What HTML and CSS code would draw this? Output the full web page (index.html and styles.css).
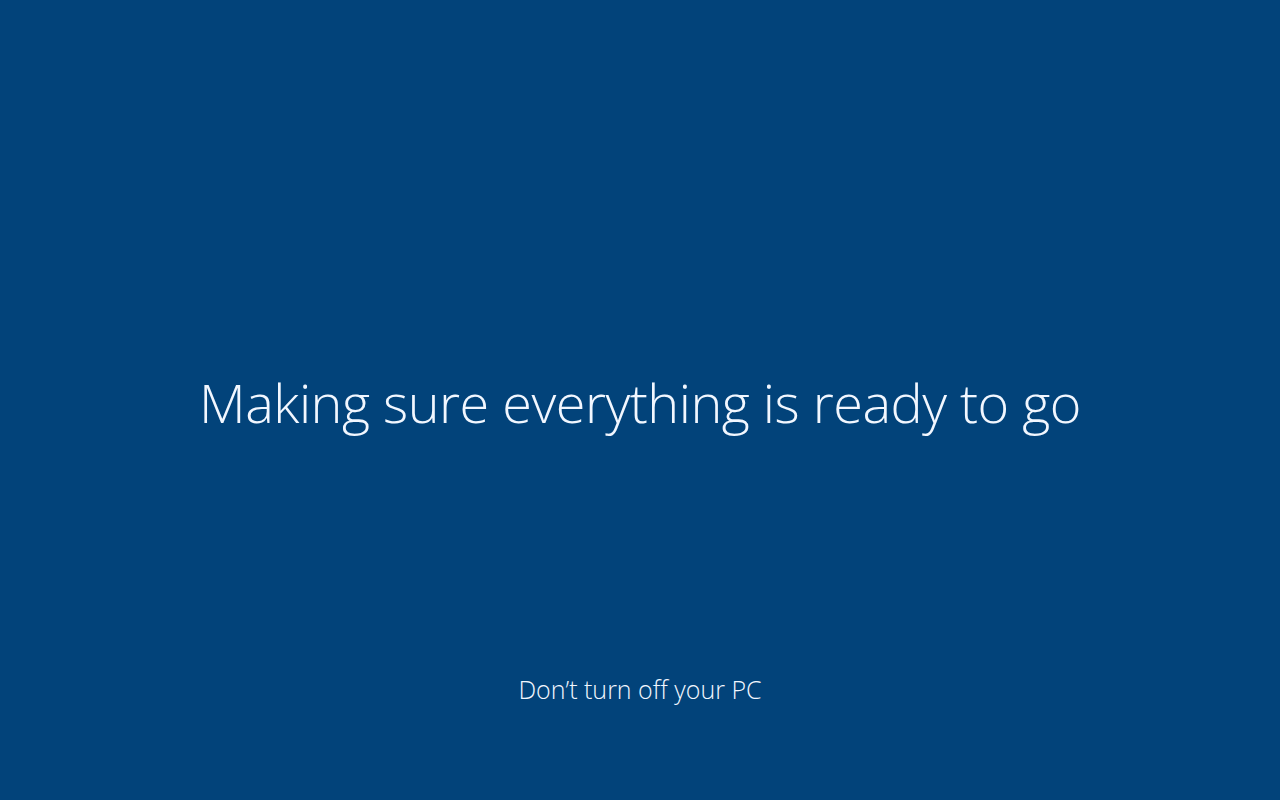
FILE: index.html
```html
<!DOCTYPE html>
<html lang="en">
<head>
    <meta charset="UTF-8">
    <meta name="viewport" content="width=device-width, initial-scale=1.0">
    <title>Windows Setup</title>
    <link rel="stylesheet" href="styles.css">
</head>
<body>
    <div class="screen">
        <div class="stage">
            <h1 class="status">Making sure everything is ready to go</h1>
        </div>
        <p class="hint">Don’t turn off your PC</p>
    </div>
</body>
</html>
```

FILE: styles.css
```css
body {
    margin: 0;
    background: #02437a;
    color: #f2f7ff;
    font-family: 'Open Sans', 'Noto Sans', sans-serif;
    font-weight: 300;
}

.screen {
    height: 100vh;
    display: flex;
    flex-direction: column;
}

.stage {
    flex: 1;
    display: flex;
    justify-content: center;
    align-items: center;
    padding-top: 126px;
}

.status {
    margin: 0;
    font-size: 54px;
    font-weight: 300;
    line-height: 1;
    letter-spacing: -0.5px;
}

.hint {
    margin: 0 0 98px;
    text-align: center;
    font-size: 25px;
    line-height: 1;
    letter-spacing: 0;
}
```
